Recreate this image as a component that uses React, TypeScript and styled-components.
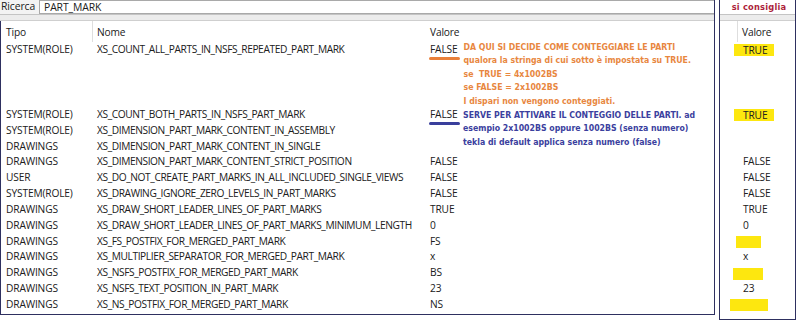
import React from 'react';
import styled, { createGlobalStyle } from 'styled-components';

const Global = createGlobalStyle`
  html, body { margin: 0; padding: 0; background: #ffffff; }
  body {
    width: 800px; height: 321px; overflow: hidden;
    font-family: "Open Sans", "Noto Sans", sans-serif;
    color: #202020;
  }
`;

const NAVY = '#2e3060';
const ROW_H = 15.83;

const Page = styled.div`
  display: flex;
  width: 800px;
  height: 321px;
  gap: 4px;
`;

const LeftPanel = styled.section`
  width: 715px;
  height: 315px;
  box-sizing: border-box;
  border-right: 1.5px solid ${NAVY};
  border-bottom: 1.5px solid ${NAVY};
  display: flex;
  flex-direction: column;
`;

const RightPanel = styled.section`
  width: 77px;
  height: 320px;
  box-sizing: border-box;
  border-left: 1.5px solid ${NAVY};
  border-right: 1.5px solid ${NAVY};
  border-bottom: 1.5px solid ${NAVY};
  display: flex;
  flex-direction: column;
`;

const SearchBar = styled.div`
  height: 14px;
  display: flex;
  align-items: stretch;
  font-size: 10.4px;
  line-height: 13px;
  letter-spacing: -0.1px;
`;

const SearchLabel = styled.span`
  width: 38px;
  padding-left: 1px;
  background: #f3f3f3;
`;

const SearchInput = styled.div`
  flex: 1;
  border: 1px solid #a9a9a9;
  border-right: none;
  padding-left: 4px;
  background: #fff;
`;

const Band = styled.div`
  height: 5px;
  background: #ececec;
  border-top: 1px solid #c4c4c4;
  border-bottom: 1px solid #cfcfcf;
`;

const PanelTitle = styled.div`
  height: 14px;
  padding-left: 3px;
  font-family: "DejaVu Sans", Verdana, sans-serif;
  font-weight: bold;
  font-size: 8.3px;
  line-height: 15px;
  color: #ad1f3c;
  text-align: center;
  letter-spacing: 0.2px;
`;

const TableBody = styled.div<{ $bordered?: boolean }>`
  flex: 1;
  border-left: ${p => (p.$bordered ? `1.5px solid ${NAVY}` : 'none')};
  font-size: 10.2px;
  letter-spacing: -0.15px;
`;

const Grid = styled.div<{ $cols: string }>`
  display: grid;
  grid-template-columns: ${p => p.$cols};
`;

const HeaderCell = styled.div<{ $sep?: boolean; $indent?: number }>`
  height: 21px;
  padding-top: 2px;
  line-height: 19px;
  margin-left: ${p => p.$indent ?? 0}px;
  padding-left: ${p => (p.$sep ? 4 : 5)}px;
  border-left: ${p => (p.$sep ? '1px solid #dedede' : 'none')};
  box-sizing: border-box;
  white-space: nowrap;
`;

const Cell = styled.div<{ $h?: number; $tight?: boolean }>`
  height: ${p => p.$h ?? ROW_H}px;
  line-height: ${ROW_H}px;
  padding-left: 5px;
  white-space: nowrap;
  position: relative;
  letter-spacing: ${p => (p.$tight ? '-0.4px' : 'inherit')};
`;

const ValueWrap = styled.div`
  display: flex;
  align-items: flex-start;
  gap: 6px;
`;

const Marked = styled.span<{ $color: string }>`
  position: relative;
  display: inline-block;
  &::after {
    content: '';
    position: absolute;
    left: -1px;
    right: -2px;
    top: 15px;
    height: 3px;
    border-radius: 2px;
    background: ${p => p.$color};
  }
`;

const Note = styled.div<{ $color: string }>`
  font-family: "DejaVu Sans Condensed", "DejaVu Sans", Verdana, sans-serif;
  font-stretch: condensed;
  font-weight: bold;
  font-size: 8.7px;
  line-height: 13.4px;
  letter-spacing: 0;
  color: ${p => p.$color};
  white-space: pre;
  margin-top: -1px;
`;

const FloatingNote = styled(Note)`
  position: absolute;
  left: 38px;
  top: 2px;
  margin-top: 0;
  z-index: 1;
`;

const RightCell = styled.div<{ $h?: number }>`
  height: ${p => p.$h ?? ROW_H}px;
  line-height: ${ROW_H}px;
  padding-left: 23px;
  white-space: nowrap;
`;

const Highlight = styled.span<{ $w?: number; $x?: number }>`
  display: inline-block;
  background: #fde70f;
  height: 12px;
  line-height: 12px;
  padding: 0 7px 0 9px;
  margin-left: ${p => -(p.$x ?? 9)}px;
  vertical-align: middle;
  box-sizing: border-box;
  min-width: ${p => p.$w ?? 0}px;
`;

type Row = { tipo: string; nome: string; valore: string };

const rows: Row[] = [
  { tipo: 'SYSTEM(ROLE)', nome: 'XS_COUNT_ALL_PARTS_IN_NSFS_REPEATED_PART_MARK', valore: 'FALSE' },
  { tipo: 'SYSTEM(ROLE)', nome: 'XS_COUNT_BOTH_PARTS_IN_NSFS_PART_MARK', valore: 'FALSE' },
  { tipo: 'SYSTEM(ROLE)', nome: 'XS_DIMENSION_PART_MARK_CONTENT_IN_ASSEMBLY', valore: '' },
  { tipo: 'DRAWINGS', nome: 'XS_DIMENSION_PART_MARK_CONTENT_IN_SINGLE', valore: '' },
  { tipo: 'DRAWINGS', nome: 'XS_DIMENSION_PART_MARK_CONTENT_STRICT_POSITION', valore: 'FALSE' },
  { tipo: 'USER', nome: 'XS_DO_NOT_CREATE_PART_MARKS_IN_ALL_INCLUDED_SINGLE_VIEWS', valore: 'FALSE' },
  { tipo: 'SYSTEM(ROLE)', nome: 'XS_DRAWING_IGNORE_ZERO_LEVELS_IN_PART_MARKS', valore: 'FALSE' },
  { tipo: 'DRAWINGS', nome: 'XS_DRAW_SHORT_LEADER_LINES_OF_PART_MARKS', valore: 'TRUE' },
  { tipo: 'DRAWINGS', nome: 'XS_DRAW_SHORT_LEADER_LINES_OF_PART_MARKS_MINIMUM_LENGTH', valore: '0' },
  { tipo: 'DRAWINGS', nome: 'XS_FS_POSTFIX_FOR_MERGED_PART_MARK', valore: 'FS' },
  { tipo: 'DRAWINGS', nome: 'XS_MULTIPLIER_SEPARATOR_FOR_MERGED_PART_MARK', valore: 'x' },
  { tipo: 'DRAWINGS', nome: 'XS_NSFS_POSTFIX_FOR_MERGED_PART_MARK', valore: 'BS' },
  { tipo: 'DRAWINGS', nome: 'XS_NSFS_TEXT_POSITION_IN_PART_MARK', valore: '23' },
  { tipo: 'DRAWINGS', nome: 'XS_NS_POSTFIX_FOR_MERGED_PART_MARK', valore: 'NS' },
];

type Rec = { text?: string; mark?: boolean; w?: number; x?: number };
const recommended: Rec[] = [
  { text: 'TRUE', mark: true, w: 38 },
  { text: 'TRUE', mark: true, w: 38 },
  {},
  {},
  { text: 'FALSE' },
  { text: 'FALSE' },
  { text: 'FALSE' },
  { text: 'TRUE' },
  { text: '0' },
  { mark: true, w: 25, x: 7 },
  { text: 'x' },
  { mark: true, w: 30, x: 10 },
  { text: '23' },
  { mark: true, w: 38, x: 13 },
];

const FIRST_H = 65;

const orangeNote = [
  'DA QUI SI DECIDE COME CONTEGGIARE LE PARTI',
  'qualora la stringa di cui sotto è impostata su TRUE.',
  'se  TRUE = 4x1002BS',
  'se FALSE = 2x1002BS',
  'I dispari non vengono conteggiati.',
];

const blueNote = [
  'SERVE PER ATTIVARE IL CONTEGGIO DELLE PARTI. ad',
  'esempio 2x1002BS oppure 1002BS (senza numero)',
  'tekla di default applica senza numero (false)',
];

function ValoreCell({ index, value }: { index: number; value: string }) {
  if (index === 0) {
    return (
      <ValueWrap>
        <Marked $color="#e9803a">{value}</Marked>
        <Note $color="#e8873f">
          {orangeNote.map(l => (
            <div key={l}>{l}</div>
          ))}
        </Note>
      </ValueWrap>
    );
  }
  if (index === 1) {
    return (
      <>
        <Marked $color="#3a3f9c">{value}</Marked>
        <FloatingNote $color="#3b3f9e">
          {blueNote.map(l => (
            <div key={l}>{l}</div>
          ))}
        </FloatingNote>
      </>
    );
  }
  return <>{value}</>;
}

export default function App() {
  const cols = '91px 333px 1fr';
  return (
    <>
      <Global />
      <Page>
        <LeftPanel>
          <SearchBar>
            <SearchLabel>Ricerca</SearchLabel>
            <SearchInput>PART_MARK</SearchInput>
          </SearchBar>
          <Band />
          <TableBody $bordered>
            <Grid $cols={cols}>
              <HeaderCell>Tipo</HeaderCell>
              <HeaderCell $sep>Nome</HeaderCell>
              <HeaderCell>Valore</HeaderCell>
              {rows.map((r, i) => (
                <React.Fragment key={r.nome}>
                  <Cell $h={i === 0 ? FIRST_H : undefined}>{r.tipo}</Cell>
                  <Cell $h={i === 0 ? FIRST_H : undefined} $tight>{r.nome}</Cell>
                  <Cell $h={i === 0 ? FIRST_H : undefined}>
                    <ValoreCell index={i} value={r.valore} />
                  </Cell>
                </React.Fragment>
              ))}
            </Grid>
          </TableBody>
        </LeftPanel>
        <RightPanel>
          <PanelTitle>si consiglia</PanelTitle>
          <Band />
          <TableBody>
            <Grid $cols="1fr">
              <HeaderCell $sep $indent={17}>Valore</HeaderCell>
              {recommended.map((r, i) => (
                <RightCell key={i} $h={i === 0 ? FIRST_H : undefined}>
                  {r.mark ? (
                    <Highlight $w={r.w} $x={r.x}>{r.text}</Highlight>
                  ) : (
                    r.text
                  )}
                </RightCell>
              ))}
            </Grid>
          </TableBody>
        </RightPanel>
      </Page>
    </>
  );
}
